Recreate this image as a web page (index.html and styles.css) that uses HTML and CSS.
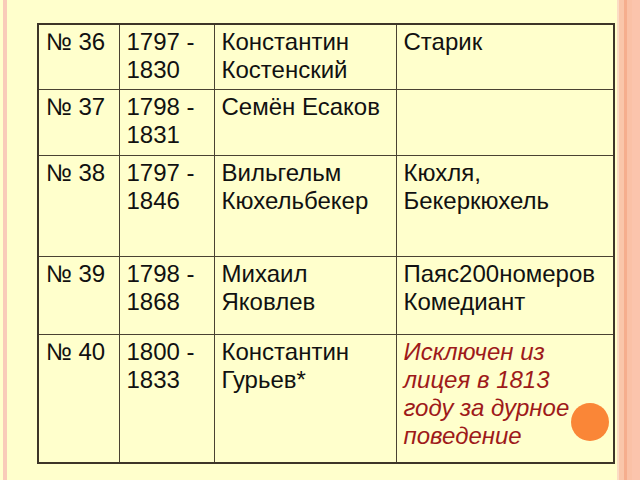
FILE: index.html
```html
<!DOCTYPE html>
<html lang="ru">
<head>
<meta charset="utf-8">
<title>Лицеисты</title>
<link rel="stylesheet" href="styles.css">
</head>
<body>
<div class="slide">
  <table class="roster">
    <colgroup>
      <col class="c1"><col class="c2"><col class="c3"><col class="c4">
    </colgroup>
    <tr class="r1">
      <td>№ 36</td><td>1797 -<br>1830</td><td>Константин<br>Костенский</td><td>Старик</td>
    </tr>
    <tr class="r2">
      <td>№ 37</td><td>1798 -<br>1831</td><td>Семён Есаков</td><td></td>
    </tr>
    <tr class="r3">
      <td>№ 38</td><td>1797 -<br>1846</td><td>Вильгельм<br>Кюхельбекер</td><td>Кюхля,<br>Бекеркюхель</td>
    </tr>
    <tr class="r4">
      <td>№ 39</td><td>1798 -<br>1868</td><td>Михаил<br>Яковлев</td><td>Паяс200номеров<br>Комедиант</td>
    </tr>
    <tr class="r5">
      <td>№ 40</td><td>1800 -<br>1833</td><td>Константин<br>Гурьев*</td><td class="note">Исключен из<br>лицея в 1813<br>году за дурное<br>поведение</td>
    </tr>
  </table>
  <div class="dot"></div>
</div>
</body>
</html>
```

FILE: styles.css
```css
html, body {
  margin: 0;
  padding: 0;
}
body {
  width: 640px;
  height: 480px;
  overflow: hidden;
  background: linear-gradient(to right,
    #FFFFCC 0 3px,
    #F9CBB9 3px 7px,
    #FFFFCC 7px 617px,
    #FCDCC4 617px 619px,
    #FAC6AA 619px 624px,
    #F6AE8E 624px 627px,
    #FAC1A6 627px 632px,
    #FBC4AC 632px 640px);
  font-family: "Liberation Sans", Arial, sans-serif;
  color: #111;
}
.slide {
  position: relative;
  width: 640px;
  height: 480px;
  padding: 23px 0 0 37px;
  box-sizing: border-box;
}
.roster {
  border-collapse: collapse;
  table-layout: fixed;
  width: 577px;
  font-size: 24px;
  line-height: 28px;
  border: 2px solid #3d3528;
}
.c1 { width: 81px; }
.c2 { width: 95px; }
.c3 { width: 182px; }
.c4 { width: 218px; }
.roster td {
  border: 1px solid #4a4232;
  vertical-align: top;
  padding: 3px 4px 0 7px;
  white-space: nowrap;
}
.r1 td { height: 61px; }
.r2 td { height: 62px; }
.r3 td { height: 97px; }
.r4 td { height: 74px; }
.r5 td { height: 124px; }
.note {
  color: #9E1A1A;
  font-style: italic;
}
.dot {
  position: absolute;
  left: 571px;
  top: 403px;
  width: 38px;
  height: 38px;
  border-radius: 50%;
  background: #FA8637;
}
```
